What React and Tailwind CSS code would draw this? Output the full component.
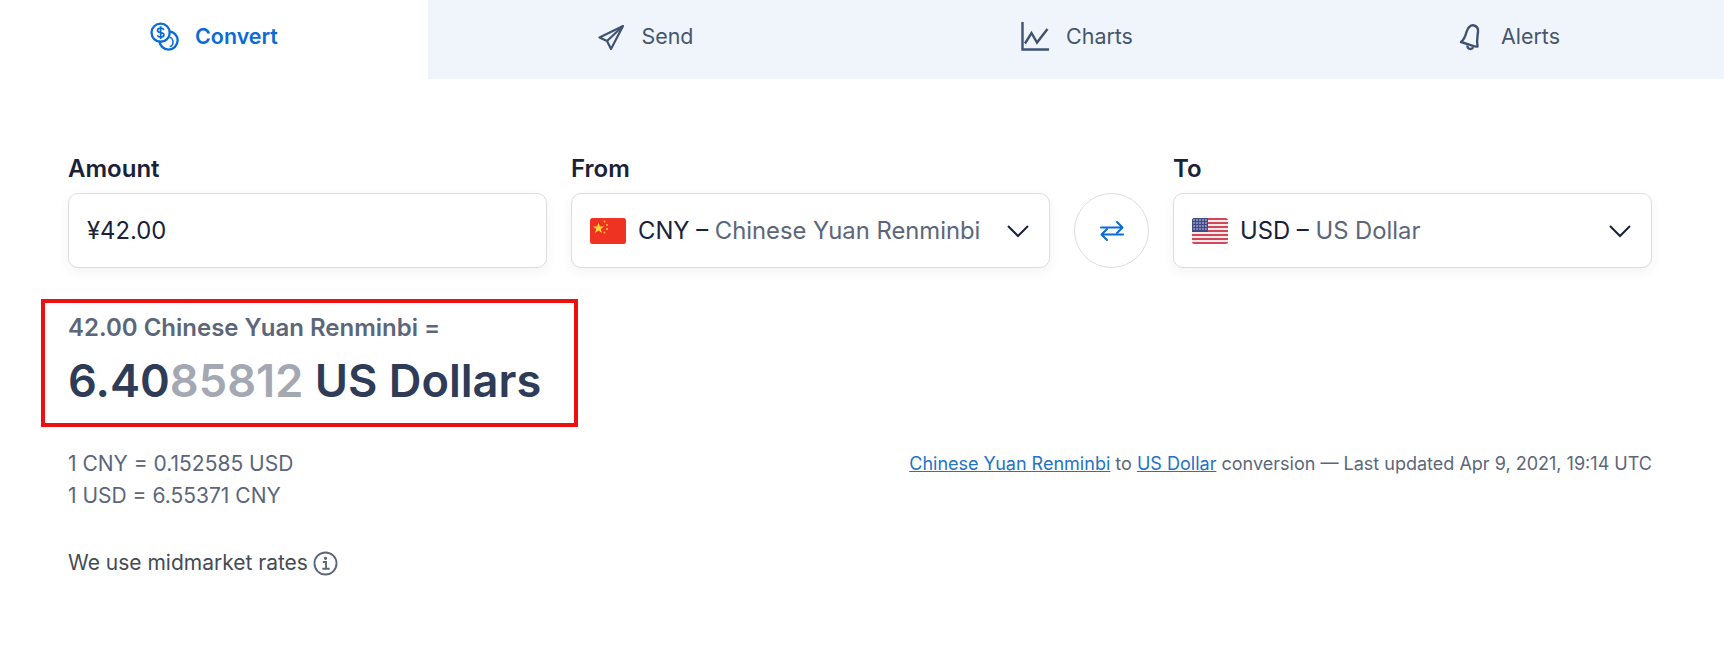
import React from 'react';

const ConvertIcon = () => (
  <svg width="29" height="29" viewBox="0 0 30 30" fill="none" stroke="#0a6cd6" strokeWidth="2.4">
    <circle cx="11" cy="11" r="9.4" />
    <path d="M14.4 8.2c-.6-1.3-1.9-1.9-3.4-1.9-1.8 0-3.2.9-3.2 2.4 0 3.2 6.6 1.5 6.6 4.6 0 1.500-1.500 2.400-3.400 2.400-1.600 0-2.900-.7-3.500-2M11 4.500v13" strokeWidth="1.800" />
    <path d="M19.500 9.700a9.400 9.400 0 1 1-9.700 9.800" />
    <path d="M23 17.600c-.5-1-1.500-1.500-2.600-1.500M23 23.800c-.5 1-1.500 1.500-2.600 1.500M23.800 20.700c0-1.200-.3-2.200-.8-3.100M23.800 20.700c0 1.200-.3 2.200-.8 3.100" strokeWidth="1.600" />
  </svg>
);

const SendIcon = () => (
  <svg width="28" height="28" viewBox="0 0 28 28" fill="none" stroke="#3f5371" strokeWidth="2.200" strokeLinejoin="round">
    <path d="M26 3 2.500 14.500l7.500 3.500 4 8z" />
    <path d="M26 3 10 18" />
  </svg>
);

const ChartsIcon = () => (
  <svg width="28" height="29" viewBox="0 0 28 29" fill="none" stroke="#3f5371" strokeWidth="2.400">
    <path d="M1.500 0v27.500H28" />
    <path d="M4 21.500 10.500 11l5.500 9.500L26.500 7" />
  </svg>
);

const BellIcon = () => (
  <svg width="26" height="28" viewBox="0 0 26 28" fill="none" stroke="#3f5371" strokeWidth="2.400" strokeLinejoin="round">
    <path d="M16 2.500c3 .8 4.400 3.500 4 6.500-.6 4.500-1.500 8.500-.5 14.500-1.800.3-3.500-.2-4.500-.6L3 19c2.500-2 4.200-5 5.500-10 1-3.800 4-7.500 7.500-6.500z" />
    <path d="M9.500 22.500c-.3 2 1 3.500 3 3.500 1.200 0 2.200-.7 2.700-1.700" />
  </svg>
);

const SwapIcon = () => (
  <svg width="26" height="24" viewBox="0 0 26 24" fill="none" stroke="#0a6cd6" strokeWidth="2" strokeLinecap="round" strokeLinejoin="round">
    <path d="M2 8.500h21M18 3l5.500 5.500L18 14" />
    <path d="M24 15.500H3M8 10 2.500 15.500 8 21" />
  </svg>
);

const InfoIcon = () => (
  <svg width="25" height="25" viewBox="0 0 24 24" fill="none" stroke="#5c667b" strokeWidth="1.800">
    <circle cx="12" cy="12" r="10.600" />
    <path d="M9.500 10.500H12.500V17M9 17h7" />
    <circle cx="12" cy="7" r="0.700" fill="#5c667b" />
  </svg>
);

const Chevron = () => (
  <svg width="24" height="14" viewBox="0 0 24 14" fill="none" stroke="#1a2238" strokeWidth="2" className="ml-auto shrink-0">
    <path d="M2 2l10 10L22 2" />
  </svg>
);

const ChinaFlag = () => (
  <svg width="36" height="26" viewBox="0 0 36 26" className="shrink-0">
    <rect width="36" height="26" rx="2.500" fill="#ee3322" />
    <path d="M7.500 4.500l1.400 4.100h4.200l-3.400 2.500 1.300 4-3.500-2.500-3.500 2.500 1.300-4-3.400-2.500h4.200z" fill="#fcd835" transform="translate(1 0)" />
    <g fill="#f8c03a">
      <circle cx="14.500" cy="3.500" r="1" />
      <circle cx="17" cy="7" r="1" />
      <circle cx="17" cy="11" r="1" />
      <circle cx="14.500" cy="14.500" r="1" />
    </g>
  </svg>
);

const UsFlag = () => (
  <svg width="36" height="26" viewBox="0 0 36 26" className="shrink-0">
    <defs>
      <clipPath id="flagClip">
        <rect width="36" height="26" rx="2.500" />
      </clipPath>
    </defs>
    <g clipPath="url(#flagClip)">
      <rect width="36" height="26" fill="#fbeaea" />
      {[0, 4, 8, 12, 16, 20, 24].map(y => (
        <rect key={y} y={y} width="36" height="2" fill="#d0485a" />
      ))}
      <rect width="16" height="14" fill="#3f4a86" />
      {[2, 5, 8, 11].map(y =>
        [2, 5, 8, 11, 14].map(x => (
          <circle key={x + '-' + y} cx={x} cy={y} r="0.800" fill="#d8dcf0" />
        ))
      )}
    </g>
  </svg>
);

const tabs = [
  { label: 'Send', icon: <SendIcon /> },
  { label: 'Charts', icon: <ChartsIcon /> },
  { label: 'Alerts', icon: <BellIcon /> },
];

const fieldBox = 'h-[75px] flex items-center bg-white border border-[#dddddd] rounded-[10px] shadow-[0_4px_12px_rgba(35,55,80,0.06)]';
const fieldLabel = 'text-[24px] leading-[30px] font-semibold text-[#1a2238] mb-[9px]';

const CurrencySelect = ({ flag, code, name }) => {
  return (
    <div className={fieldBox + ' pl-[18px] pr-[19px]'}>
      {flag}
      <div className="ml-[12px] text-[23.8px] whitespace-nowrap text-[#1a2238]">
        {code} – <span className="text-[#5c667b]">{name}</span>
      </div>
      <Chevron />
    </div>
  );
};

const App = () => {
  return (
    <div className="w-[1724px] h-[646px] bg-white overflow-hidden font-['Inter',sans-serif]">
      <div className="flex h-[79px]">
        <div className="w-[428px] pb-[6px] flex items-center justify-center gap-[16px] bg-white text-[#0a6cd6] text-[21.4px] font-semibold">
          <ConvertIcon />
          Convert
        </div>
        <div className="flex-1 flex bg-[#eff5fb] text-[21.4px] text-[#46566f]">
          {tabs.map(tab => {
            return (
              <div key={tab.label} className="flex-1 pb-[6px] pl-[2px] flex items-center justify-center gap-[17px]">
                {tab.icon}
                {tab.label}
              </div>
            );
          })}
        </div>
      </div>

      <div className="pl-[68px] pr-[72px] pt-[75px]">
        <div className="flex items-end gap-[24px]">
          <div className="w-[479px]">
            <div className={fieldLabel}>Amount</div>
            <div className={fieldBox + ' px-[18px] text-[23.8px] text-[#1a2238]'}>¥42.00</div>
          </div>
          <div className="w-[479px]">
            <div className={fieldLabel}>From</div>
            <CurrencySelect flag={<ChinaFlag />} code="CNY" name="Chinese Yuan Renminbi" />
          </div>
          <div className="w-[75px] h-[75px] rounded-full border border-[#dddddd] flex items-center justify-center shrink-0">
            <SwapIcon />
          </div>
          <div className="w-[479px]">
            <div className={fieldLabel}>To</div>
            <CurrencySelect flag={<UsFlag />} code="USD" name="US Dollar" />
          </div>
        </div>

        <div className="w-[537px] h-[128px] -ml-[27px] mt-[31px] border-4 border-[#ec1010] pl-[23px] pt-[10px]">
          <div className="text-[24px] leading-[30px] font-semibold text-[#5c667b]">42.00 Chinese Yuan Renminbi =</div>
          <div className="text-[45.2px] leading-[54px] mt-[11px] font-semibold text-[#2e3c57] whitespace-nowrap">
            6.40<span className="text-[#a3a8b3]">85812</span> US Dollars
          </div>
        </div>

        <div className="flex justify-between mt-[21px]">
          <div className="text-[21px] leading-[32px] text-[#5c667b]">
            <div>1 CNY = 0.152585 USD</div>
            <div>1 USD = 6.55371 CNY</div>
            <div className="flex items-center gap-[5px] mt-[35px] text-[#454b54]">
              We use midmarket rates
              <InfoIcon />
            </div>
          </div>
          <div className="text-[18.02px] leading-[31px] text-[#5c667b]">
            <span className="text-[#2472c4] underline">Chinese Yuan Renminbi</span> to{' '}
            <span className="text-[#2472c4] underline">US Dollar</span> conversion — Last updated Apr 9, 2021, 19:14 UTC
          </div>
        </div>
      </div>
    </div>
  );
};

export default App;
